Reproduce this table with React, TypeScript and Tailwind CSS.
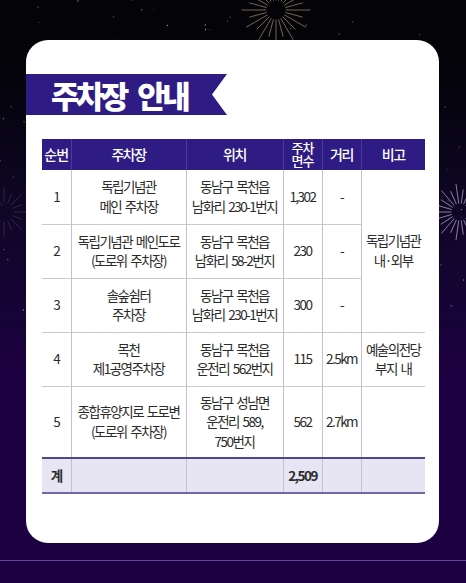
import React from 'react';

// --- BACKGROUND DRAWING ---
const rand = (seed: number) => {
  let s = seed;
  return () => {
    s = (s * 9301 + 49297) % 233280;
    return s / 233280;
  };
};

const Stars: React.FC = () => {
  const r = rand(7);
  const stars = Array.from({ length: 140 }, () => ({
    x: r() * 466,
    y: r() * 330,
    o: 0.15 + r() * 0.45,
  }));
  return (
    <>
      {stars.map((s, i) => (
        <circle key={i} cx={s.x} cy={s.y} r={0.7} fill="#ffffff" opacity={s.o} />
      ))}
    </>
  );
};

const Burst: React.FC<{ cx: number; cy: number; r1: number; r2: number; n: number; color: string; op?: number }> = ({ cx, cy, r1, r2, n, color, op = 0.7 }) => (
  <g stroke={color} strokeWidth={1} opacity={op} strokeLinecap="round">
    {Array.from({ length: n }, (_, i) => {
      const a = (i / n) * Math.PI * 2;
      const k = i % 2 ? 0.8 : 1;
      return (
        <line
          key={i}
          x1={cx + Math.cos(a) * r1}
          y1={cy + Math.sin(a) * r1}
          x2={cx + Math.cos(a) * r2 * k}
          y2={cy + Math.sin(a) * r2 * k}
        />
      );
    })}
  </g>
);

// --- TABLE DATA ---
type Row = { no: string; name: string[]; loc: string[]; cnt: string; dist: string };

const rows: Row[] = [
  { no: '1', name: ['독립기념관', '메인 주차장'], loc: ['동남구 목천읍', '남화리 230-1번지'], cnt: '1,302', dist: '-' },
  { no: '2', name: ['독립기념관 메인도로', '(도로위 주차장)'], loc: ['동남구 목천읍', '남화리 58-2번지'], cnt: '230', dist: '-' },
  { no: '3', name: ['솔숲쉼터', '주차장'], loc: ['동남구 목천읍', '남화리 230-1번지'], cnt: '300', dist: '-' },
  { no: '4', name: ['목천', '제1공영주차장'], loc: ['동남구 목천읍', '운전리 562번지'], cnt: '115', dist: '2.5km' },
  { no: '5', name: ['종합휴양지로 도로변', '(도로위 주차장)'], loc: ['동남구 성남면', '운전리 589,', '750번지'], cnt: '562', dist: '2.7km' },
];

const Lines: React.FC<{ items: string[] }> = ({ items }) => (
  <>
    {items.map((t, i) => (
      <div key={i} className="whitespace-nowrap">{t}</div>
    ))}
  </>
);

const td = 'border-r border-[#c3bfd8] text-center align-middle px-0';

export default function App() {
  return (
    <div
      className="relative w-[466px] h-[583px] overflow-hidden bg-gradient-to-b from-[#040308] from-10% via-[#0f0625] via-35% to-[#1c0042] to-65% flex flex-col"
      style={{ fontFamily: '"Noto Sans CJK KR", "Noto Sans", sans-serif' }}
    >
      <svg className="absolute inset-0" width={466} height={583}>
        <Stars />
        <Burst cx={276} cy={10} r1={10} r2={34} n={24} color="#c8b98a" op={0.55} />
        <Burst cx={460} cy={212} r1={9} r2={28} n={22} color="#d8d2f0" op={0.6} />
        <Burst cx={4} cy={212} r1={10} r2={24} n={16} color="#8c82b8" op={0.25} />
      </svg>

      {/* card */}
      <div className="relative mt-[40px] ml-[26px] w-[413px] h-[503px] bg-white rounded-[22px] pt-[34px]">
        <div className="w-[201px] h-[41px] bg-[#2e1c84] [clip-path:polygon(0_0,100%_0,calc(100%_-_15px)_50%,100%_100%,0_100%)] flex items-center pl-[25px]">
          <span className="text-white text-[31px] font-black tracking-[-3.6px] [word-spacing:8px] leading-none whitespace-nowrap">주차장 안내</span>
        </div>

        <table className="mt-[24px] ml-[16px] w-[383px] border-collapse table-fixed text-[13.5px] leading-[19.5px] tracking-[-1.5px] [word-spacing:2px] text-[#2b2b2b]">
          <colgroup>
            <col className="w-[29px]" />
            <col className="w-[115px]" />
            <col className="w-[97px]" />
            <col className="w-[39px]" />
            <col className="w-[39px]" />
            <col className="w-[64px]" />
          </colgroup>
          <thead>
            <tr className="h-[31px] bg-[#2e1c84] text-white text-[14px]">
              <th className="border-r border-[#4b3a9e] font-medium tracking-[-1px]">순번</th>
              <th className="border-r border-[#4b3a9e] font-medium">주차장</th>
              <th className="border-r border-[#4b3a9e] font-medium">위치</th>
              <th className="border-r border-[#4b3a9e] font-medium text-[13px] leading-[12.5px] tracking-[-1px]">
                주차
                <br />
                면수
              </th>
              <th className="border-r border-[#4b3a9e] font-medium">거리</th>
              <th className="font-medium">비고</th>
            </tr>
          </thead>
          <tbody>
            {rows.map((r, i) => (
              <tr key={r.no} className={`border-b border-[#c9c9d1] ${i === 4 ? 'h-[72px]' : 'h-[54px]'}`}>
                <td className={td}>{r.no}</td>
                <td className={td}>
                  <Lines items={r.name} />
                </td>
                <td className={td}>
                  <Lines items={r.loc} />
                </td>
                <td className={td}>{r.cnt}</td>
                <td className={td}>{r.dist}</td>
                {i === 0 && (
                  <td rowSpan={3} className="text-center align-middle">
                    <div>독립기념관</div>
                    <div>내·외부</div>
                  </td>
                )}
                {i === 3 && (
                  <td className="text-center align-middle">
                    <div>예술의전당</div>
                    <div>부지 내</div>
                  </td>
                )}
                {i === 4 && <td />}
              </tr>
            ))}
            <tr className="h-[35px] bg-[#e7e5f3] border-t-2 border-t-[#4f4690] border-b-2 border-b-[#7069a6] font-bold">
              <td className={td}>계</td>
              <td className={td} />
              <td className={td} />
              <td className={td}>2,509</td>
              <td className={td} />
              <td />
            </tr>
          </tbody>
        </table>
      </div>

      <div className="mt-[17px] h-px bg-[#5b4596]" />
    </div>
  );
}
